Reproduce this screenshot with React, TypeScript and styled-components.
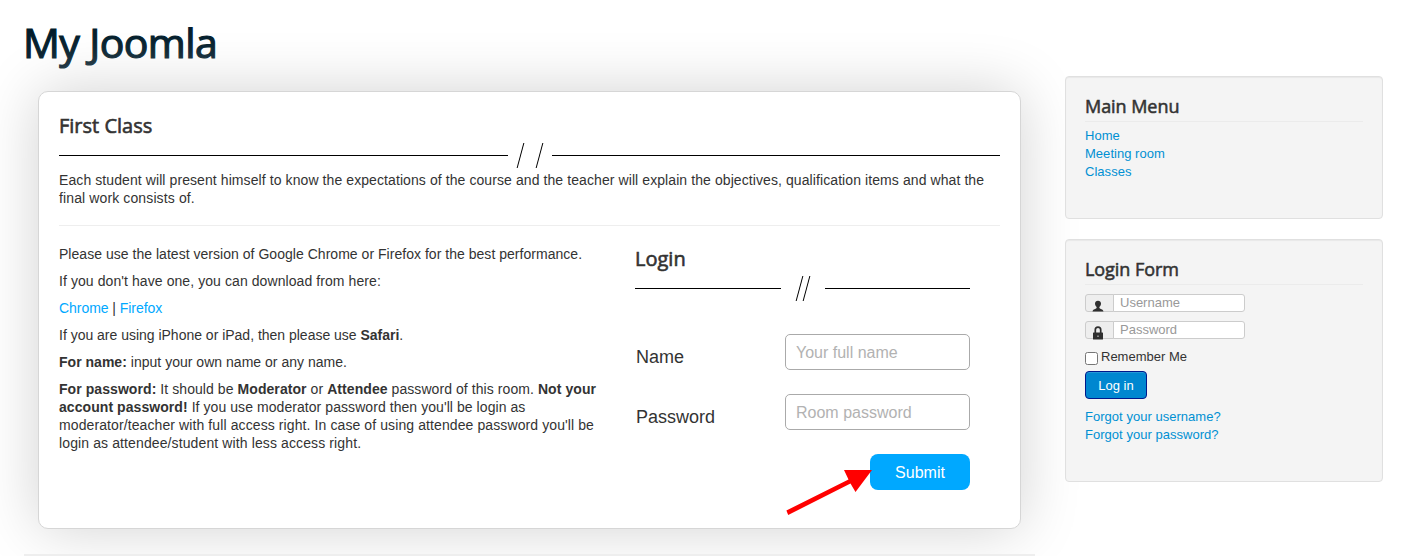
import React from "react";
import styled, { createGlobalStyle } from "styled-components";

const GlobalStyle = createGlobalStyle`
  *, *::before, *::after { box-sizing: border-box; }
  html, body { margin: 0; background: #fff; overflow: hidden; }
  body {
    color: #333;
    font: 13px/18px "Liberation Sans", Helvetica, Arial, sans-serif;
  }
  p, h1, h2, h3, ul { margin: 0; padding: 0; font-weight: 400; }
  input, button { font-family: inherit; margin: 0; outline: none; }
`;

const Page = styled.div`
  height: 556px;
  padding: 21px 36px 0 24px;
  overflow: hidden;
`;

const SiteTitle = styled.h1`
  width: max-content;
  height: 55px;
  margin-left: -1px;
  font: 400 41px/43px "Open Sans", sans-serif;
  letter-spacing: -0.6px;
  color: #001b2a;
  -webkit-text-stroke: 1.2px #001b2a;
`;

const Columns = styled.div`
  display: grid;
  grid-template-columns: 1011px 318px;
  column-gap: 30px;
`;

const Main = styled.main`
  padding-top: 15px;
`;

const Card = styled.section`
  position: relative;
  width: 983px;
  height: 438px;
  margin: 0 0 25px 14px;
  padding: 20px;
  border: 1px solid #d6d6d6;
  border-radius: 10px;
  background: #fff;
  box-shadow: 0 0 60px #d2d2d2;
`;

const CardTitle = styled.h2`
  height: 31px;
  font: 400 20px/28px "Open Sans", sans-serif;
  white-space: nowrap;
  -webkit-text-stroke: 0.6px #333;
`;

const Rule = styled.div<{ $gap: number }>`
  display: flex;
  align-items: center;
  justify-content: center;
  height: 25px;
  gap: ${(p) => p.$gap}px;
  &::before, &::after {
    content: "";
    flex: 1;
    height: 1px;
    background: #000;
  }
`;

const Slashes = styled.i<{ $width: number }>`
  width: ${(p) => p.$width}px;
  height: 25px;
  border: solid #000;
  border-width: 0 1px;
  transform: skewX(-15deg);
`;

const Description = styled.p`
  height: 55px;
  margin-top: 3px;
  font-size: 14px;
  white-space: nowrap;
  border-bottom: 1px solid #eee;
`;

const CardBody = styled.div`
  display: grid;
  grid-template-columns: 576px 335px;
`;

const Instructions = styled.div`
  display: flex;
  flex-direction: column;
  gap: 9px;
  padding-top: 19px;
  font-size: 14px;
  white-space: nowrap;
`;

const Line = styled.span<{ $track?: number }>`
  display: block;
  letter-spacing: ${(p) => p.$track ?? 0}px;
`;

const BrightLink = styled.a`
  color: #00a8ff;
`;

const RoomForm = styled.form`
  padding-top: 19px;
`;

const RoomFields = styled.div`
  display: flex;
  flex-direction: column;
  gap: 24px;
  padding-top: 33px;
`;

const Field = styled.label`
  display: flex;
  justify-content: space-between;
  height: 36px;
  padding-left: 1px;
  font-size: 18px;
  line-height: 46px;
`;

const FieldInput = styled.input`
  width: 185px;
  height: 36px;
  padding: 2px 10px 0;
  border: 1px solid #aaa;
  border-radius: 5px;
  font-size: 16px;
  background: #fff;
  &::placeholder { color: #b2b2b2; opacity: 1; }
`;

const Submit = styled.button`
  align-self: flex-end;
  width: 100px;
  height: 36px;
  padding: 2px 0 0;
  border: 0;
  border-radius: 8px;
  background: #00a8ff;
  color: #fff;
  font-size: 16px;
`;

const Arrow = styled.svg`
  position: absolute;
  left: 746px;
  top: 374px;
`;

const FooterRule = styled.div`
  height: 2px;
  background: #eee;
  position: relative;
`;

const Sidebar = styled.aside`
  display: flex;
  flex-direction: column;
  gap: 20px;
  position: relative;
`;

const Well = styled.section<{ $height: number }>`
  height: ${(p) => p.$height}px;
  padding: 19px;
  background: #f4f4f4;
  border: 1px solid #e0e0e0;
  border-radius: 4px;
  box-shadow: inset 0 1px 1px rgba(0, 0, 0, 0.05);
`;

const WellTitle = styled.h3`
  height: 26px;
  margin-bottom: 5px;
  border-bottom: 1px solid #ebebeb;
  font: 400 18px/20px "Open Sans", sans-serif;
  letter-spacing: -0.05px;
  -webkit-text-stroke: 0.55px #333;
`;

const LinkList = styled.ul`
  list-style: none;
`;

const SideLink = styled.a`
  color: #0090d3;
  letter-spacing: 0.03px;
`;

const InputGroup = styled.div`
  display: flex;
  width: 160px;
  height: 18px;
  margin-bottom: 9px;
`;

const Addon = styled.span`
  display: flex;
  justify-content: center;
  width: 29px;
  height: 18px;
  padding-right: 3px;
  border: 1px solid #ccc;
  border-radius: 3px 0 0 3px;
  background: #eee;
  svg { flex: none; overflow: visible; }
`;

const SideInput = styled.input`
  width: 132px;
  height: 18px;
  margin-left: -1px;
  padding: 0 6px 1px;
  border: 1px solid #ccc;
  border-radius: 0 3px 3px 0;
  font-size: 13px;
  background: #fff;
  &::placeholder { color: #999; opacity: 1; }
`;

const Remember = styled.label`
  display: flex;
  gap: 3px;
  height: 23px;
`;

const CheckBox = styled.input`
  appearance: none;
  width: 13px;
  height: 13px;
  margin-top: 4px;
  border: 1px solid #767676;
  border-radius: 2.5px;
  background: #fff;
`;

const LoginButton = styled.button`
  display: block;
  width: 62px;
  height: 28px;
  margin-bottom: 9px;
  padding: 0;
  border: 1px solid #00188a;
  border-radius: 4px;
  background: #0087d0;
  color: #fff;
  font-size: 13px;
  box-shadow: inset 0 1px 0 rgba(255, 255, 255, 0.15);
`;

const SideFields = styled.form`
  padding-top: 4px;
`;

export default function App() {
  return (
    <>
      <GlobalStyle />
      <Page>
        <SiteTitle>My Joomla</SiteTitle>
        <Columns>
          <Main>
            <Card>
              <CardTitle>First Class</CardTitle>
              <Rule $gap={12}>
                <Slashes $width={20} />
              </Rule>
              <Description>
                <Line $track={0.087}>
                  Each student will present himself to know the expectations of the course and the
                  teacher will explain the objectives, qualification items and what the
                </Line>
                <Line $track={0.12}>final work consists of.</Line>
              </Description>
              <CardBody>
                <Instructions>
                  <Line $track={0.03}>
                    Please use the latest version of Google Chrome or Firefox for the best performance.
                  </Line>
                  <Line $track={0.08}>If you don't have one, you can download from here:</Line>
                  <Line $track={-0.05}>
                    <BrightLink>Chrome</BrightLink> | <BrightLink>Firefox</BrightLink>
                  </Line>
                  <Line $track={-0.01}>
                    If you are using iPhone or iPad, then please use <b>Safari</b>.
                  </Line>
                  <Line $track={0.02}>
                    <b>For name:</b> input your own name or any name.
                  </Line>
                  <p>
                    <Line $track={0.07}>
                      <b>For password:</b> It should be <b>Moderator</b> or <b>Attendee</b> password
                      of this room. <b>Not your</b>
                    </Line>
                    <Line $track={0.065}>
                      <b>account password!</b> If you use moderator password then you'll be login as
                    </Line>
                    <Line $track={0.1}>
                      moderator/teacher with full access right. In case of using attendee password you'll be
                    </Line>
                    <Line $track={0.115}>login as attendee/student with less access right.</Line>
                  </p>
                </Instructions>
                <RoomForm>
                  <CardTitle>Login</CardTitle>
                  <Rule $gap={18}>
                    <Slashes $width={8} />
                  </Rule>
                  <RoomFields>
                    <Field>
                      Name
                      <FieldInput placeholder="Your full name" />
                    </Field>
                    <Field>
                      Password
                      <FieldInput placeholder="Room password" />
                    </Field>
                    <Submit type="button">Submit</Submit>
                  </RoomFields>
                </RoomForm>
              </CardBody>
              <Arrow width="92" height="52" viewBox="0 0 92 52">
                <path
                  d="M1.4 44.5 L63.500 13.500 L59 4 L87 4 L70.500 26 L65.500 17.500 L3.200 49 Z"
                  fill="#f00"
                />
              </Arrow>
            </Card>
            <FooterRule />
          </Main>
          <Sidebar>
            <Well $height={143}>
              <WellTitle>Main Menu</WellTitle>
              <LinkList>
                <li><SideLink>Home</SideLink></li>
                <li><SideLink>Meeting room</SideLink></li>
                <li><SideLink>Classes</SideLink></li>
              </LinkList>
            </Well>
            <Well $height={243}>
              <WellTitle>Login Form</WellTitle>
              <SideFields>
                <InputGroup>
                  <Addon>
                    <svg width="12" height="17" viewBox="0 0 12 17" fill="#2f2f2f">
                      <path d="M6 5.800C4.200 5.800 3 7 3 8.600c0 1.500.7 2.700 1.600 3.300v1.100C4.400 14 .8 14 .5 16.500h11c-.3-2.500-3.900-2.500-4.100-3.500v-1.100c.9-.6 1.600-1.800 1.600-3.300C9 7 7.800 5.800 6 5.800z" />
                    </svg>
                  </Addon>
                  <SideInput placeholder="Username" />
                </InputGroup>
                <InputGroup>
                  <Addon>
                    <svg width="12" height="18" viewBox="0 0 12 18">
                      <path d="M3.300 12V7.800a2.700 2.700 0 0 1 5.400 0V12" fill="none" stroke="#2f2f2f" strokeWidth="1.700" />
                      <rect x="1" y="10.500" width="10" height="7" rx="0.600" fill="#2f2f2f" />
                      <rect x="5.500" y="13.500" width="1" height="1.500" fill="#ddd" />
                    </svg>
                  </Addon>
                  <SideInput placeholder="Password" />
                </InputGroup>
                <Remember>
                  <CheckBox type="checkbox" />
                  Remember Me
                </Remember>
                <LoginButton type="button">Log in</LoginButton>
              </SideFields>
              <LinkList>
                <li><SideLink>Forgot your username?</SideLink></li>
                <li><SideLink>Forgot your password?</SideLink></li>
              </LinkList>
            </Well>
          </Sidebar>
        </Columns>
      </Page>
    </>
  );
}
